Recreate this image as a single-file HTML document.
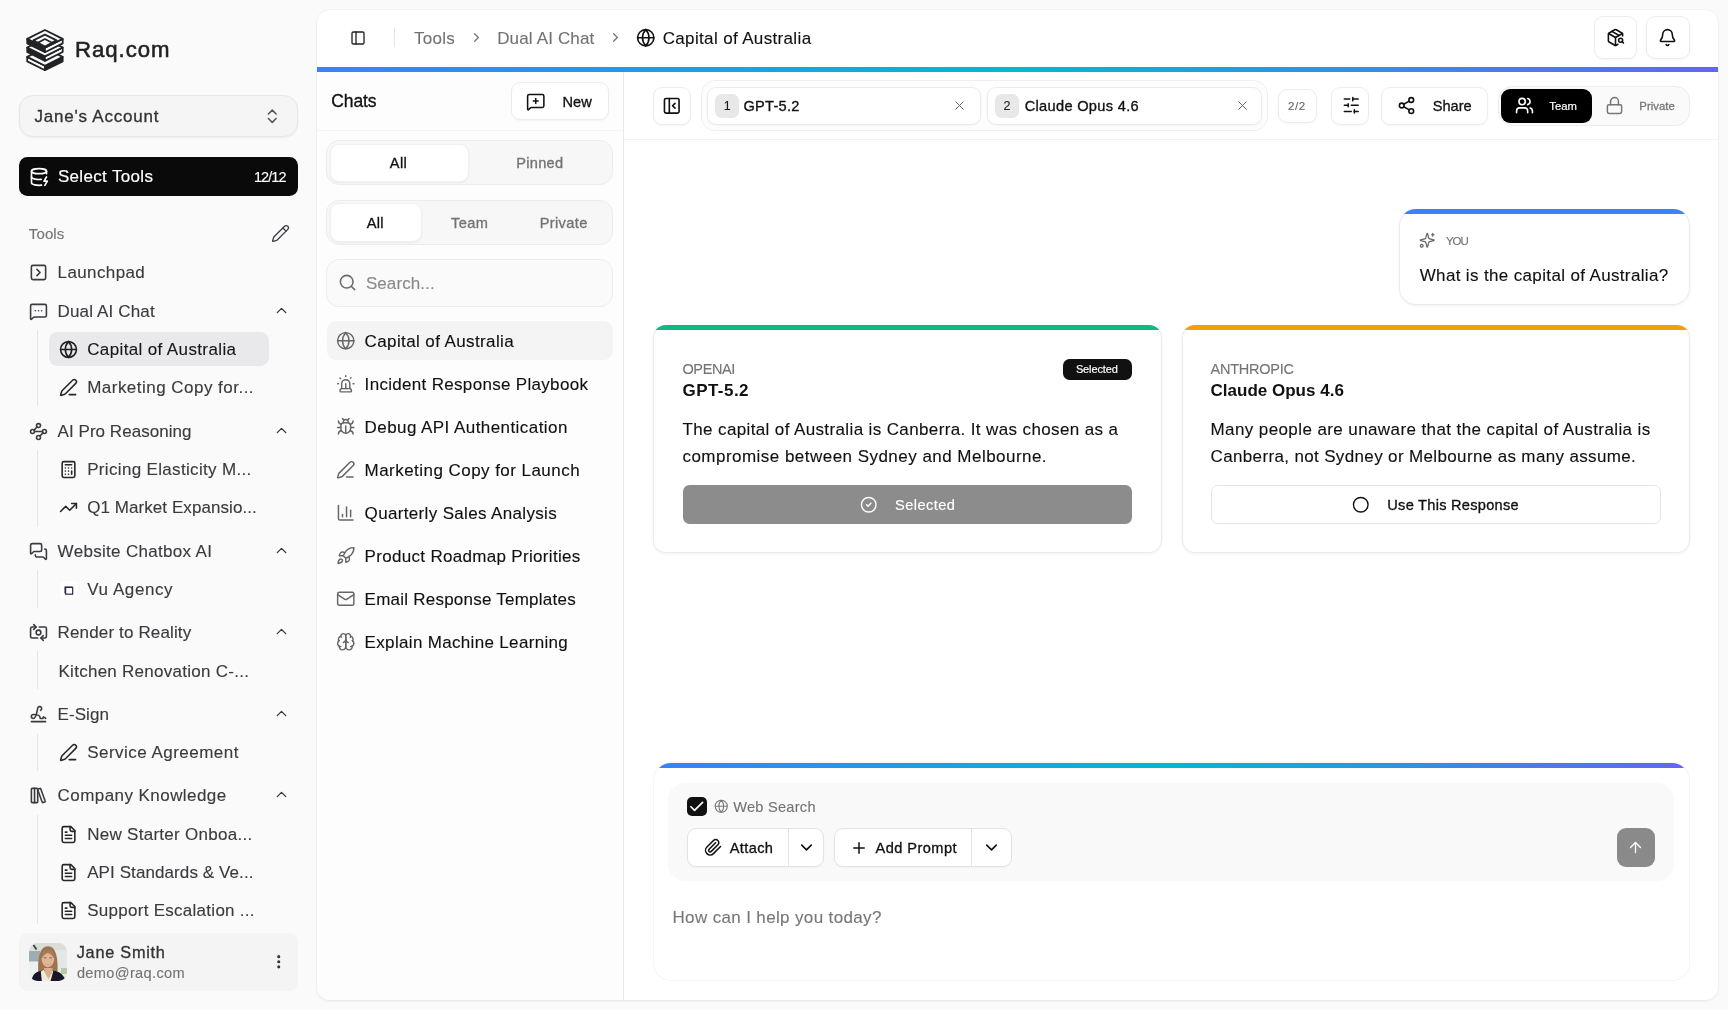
<!DOCTYPE html>
<html lang="en">
<head>
<meta charset="utf-8">
<title>Capital of Australia - Dual AI Chat - Raq.com</title>
<style>
*{box-sizing:border-box;margin:0;padding:0}
html,body{width:1728px;height:1010px;overflow:hidden;background:#fafafa}
body{font-family:"Liberation Sans",sans-serif;color:#171717;position:relative;-webkit-font-smoothing:antialiased}
.app{will-change:transform}
.app,.app *{position:absolute}
.app svg{position:static;display:block}
.app svg *{position:static}
.t{white-space:nowrap;display:block}
.ic{display:block}
.sidebar{background:#fafafa}
.acct{background:#f5f5f5;border:1px solid #e7e7e7;border-radius:14px;box-shadow:0 1px 2px rgba(0,0,0,.05)}
.seltools{background:#0a0a0a;border-radius:8.5px}
.srow{border-radius:8.5px}
.srow.on{background:#e9e9eb}
.guide{background:#e5e5e5}
.user{background:#f4f4f5;border-radius:8.5px}
.panel{background:#fff;border-radius:13px;box-shadow:0 0 0 1px rgba(0,0,0,.018),0 1px 3px rgba(0,0,0,.07);overflow:hidden}
.vsep{background:#e5e5e5}
.hbtn{background:#fff;border:1px solid #ececec;border-radius:9px;box-shadow:0 1px 2px rgba(0,0,0,.04)}
.gbar,.gbar2{background:linear-gradient(90deg,#3b82f6 0%,#06b6d4 50%,#6366f1 100%)}
.chats{background:#fdfdfd;border-right:1px solid #e9e9e9}
.chats-h{border-bottom:1px solid #f4f4f4}
.btn{background:#fff;border:1px solid #ececec;border-radius:9px;box-shadow:0 1px 2px rgba(0,0,0,.04)}
.tabs{background:#f7f7f7;border:1px solid #ececec;border-radius:13px}
.tab.on{background:#fff;border:1px solid #f0f0f0;border-radius:9px;box-shadow:0 1px 2px rgba(0,0,0,.05)}
.search{background:#fafafa;border:1px solid #ececec;border-radius:13px}
.clist{list-style:none}
.citem{border-radius:9px}
.citem.on{background:#f4f4f5}
.toolbar{border-bottom:1px solid #f3f3f3}
.models{border:1px solid #efefef;border-radius:14px;background:#fdfdfd}
.mpill{background:#fff;border:1px solid #ebebeb;border-radius:9px;box-shadow:0 1px 2px rgba(0,0,0,.04)}
.mnum{background:#e8e8e8;border-radius:6.5px}
.vis{background:#fafafa;border:1px solid #ececec;border-radius:14px}
.vis-on{background:#000;border-radius:9px}
.card{background:#fff;border-radius:17px;box-shadow:inset 0 0 0 1px #ebebeb,0 1px 3px rgba(0,0,0,.06);overflow:hidden}
.card.resp{border-radius:13px}
.badge{background:#111;border-radius:6.5px}
.selbtn{background:#8c8c8c;border-radius:6.5px}
.usebtn{background:#fff;border:1px solid #e5e5e5;border-radius:6.5px}
.composer{background:#fff;border-radius:17px;box-shadow:0 0 0 1px rgba(0,0,0,.04);overflow:hidden}
.opts{background:#f9f9f9;border-radius:17px}
.check{background:#111;border-radius:5px}
.bgroup{background:#fff;border:1px solid #e3e3e3;border-radius:9px;box-shadow:0 1px 2px rgba(0,0,0,.04)}
.bdiv{background:#e3e3e3}
.send{background:#8a8a8a;border-radius:9px}
</style>
</head>
<body>
<div class="app" style="left:0px;top:0px;width:1728px;height:1010px;">
 <aside class="sidebar" style="left:0px;top:0px;width:317px;height:1010px;">
  <div class="brand" style="left:19px;top:24px;width:279px;height:52px;">
   <span class="ic" style="left:6.5px;top:4.5px;width:38px;height:43px;"><svg viewBox="0 0 38 43" width="100%" height="100%"><g stroke="#212325" stroke-width="1.75" stroke-linejoin="round"><polygon points="1.20,27.85 18.95,36.70 18.95,41.20 1.20,32.35" fill="#fafafa"/><polygon points="18.95,36.70 36.70,27.85 36.70,32.35 18.95,41.20" fill="#212325"/><polygon points="18.95,19.00 36.70,27.85 18.95,36.70 1.20,27.85" fill="#fafafa"/><polygon points="1.20,18.50 18.95,27.35 18.95,31.85 1.20,23.00" fill="#212325"/><polygon points="18.95,27.35 36.70,18.50 36.70,23.00 18.95,31.85" fill="#fafafa"/><polygon points="18.95,9.65 36.70,18.50 18.95,27.35 1.20,18.50" fill="#fafafa"/><polygon points="1.20,9.85 18.95,18.70 18.95,23.20 1.20,14.35" fill="#212325"/><polygon points="18.95,18.70 36.70,9.85 36.70,14.35 18.95,23.20" fill="#fafafa"/><polygon points="18.95,1.00 36.70,9.85 18.95,18.70 1.20,9.85" fill="#fafafa"/><polygon points="18.95,5.6 30.6,11.4 18.95,17.2 7.3,11.4" fill="none"/><polygon points="18.95,10.1 26,13.85 18.95,17.6 11.9,13.85" fill="#fafafa"/></g></svg></span>
   <span class="t" style="left:56.1px;top:10px;width:116.7px;height:31px;font-size:22.2px;line-height:31px;letter-spacing:0.917px;-webkit-text-stroke:0.32px;color:#202224;-webkit-text-stroke:0.55px;">Raq.com</span>
  </div>
  <div class="acct" style="left:19px;top:95px;width:279px;height:42px;">
   <span class="t" style="left:14.5px;top:9px;width:140.8px;height:23px;font-size:17px;line-height:23px;letter-spacing:0.773px;-webkit-text-stroke:0.32px;color:#333;">Jane&#x27;s Account</span>
   <span class="ic" style="left:243.45px;top:11.35px;width:18.5px;height:18.5px;"><svg viewBox="0 0 24 24" width="100%" height="100%" fill="none" stroke="#555" stroke-width="2" stroke-linecap="round" stroke-linejoin="round"><path d="m7 15 5 5 5-5"/><path d="m7 9 5-5 5 5"/></svg></span>
  </div>
  <div class="seltools" style="left:19px;top:157px;width:279px;height:39px;">
   <span class="ic" style="left:9.8px;top:9.6px;width:20px;height:20px;"><svg viewBox="0 0 24 24" width="100%" height="100%" fill="none" stroke="#fff" stroke-width="2" stroke-linecap="round" stroke-linejoin="round"><ellipse cx="12" cy="5" rx="9" ry="3"/><path d="M3 5V19A9 3 0 0 0 15 21.84"/><path d="M21 5V8"/><path d="M21 12L18 17H22L19 22"/><path d="M3 12A9 3 0 0 0 14.59 14.87"/></svg></span>
   <span class="t" style="left:38.9px;top:8px;width:111.9px;height:23px;font-size:17px;line-height:23px;letter-spacing:0.332px;-webkit-text-stroke:0.18px;color:#fff;">Select Tools</span>
   <span class="t" style="left:234.9px;top:10px;width:47.1px;height:20px;font-size:14.5px;line-height:20px;letter-spacing:-0.913px;-webkit-text-stroke:0.12px;color:#fff;">12/12</span>
  </div>
  <span class="t lbl" style="left:28.8px;top:223px;width:50.5px;height:21px;font-size:15px;line-height:21px;letter-spacing:0.125px;-webkit-text-stroke:0.12px;color:#737373;">Tools</span>
  <span class="ic" style="left:271.1px;top:223.5px;width:19px;height:19px;"><svg viewBox="0 0 24 24" width="100%" height="100%" fill="none" stroke="#3f3f46" stroke-width="1.7" stroke-linecap="round" stroke-linejoin="round"><path d="M21.174 6.812a1 1 0 0 0-3.986-3.987L3.842 16.174a2 2 0 0 0-.5.83l-1.321 4.352a.5.5 0 0 0 .623.622l4.353-1.32a2 2 0 0 0 .83-.497z"/><path d="m15 5 4 4"/></svg></span>
  <nav class="nav" style="left:19px;top:255px;width:279px;height:669px;overflow:hidden;">
   <div class="nrow" style="left:0px;top:0px;width:279px;height:34px;">
    <span class="ic" style="left:9.95px;top:7.55px;width:19px;height:19px;"><svg viewBox="0 0 24 24" width="100%" height="100%" fill="none" stroke="#3a3a3f" stroke-width="2" stroke-linecap="round" stroke-linejoin="round"><rect width="18" height="18" x="3" y="3" rx="2"/><path d="m10 8 4 4-4 4"/></svg></span>
    <span class="t" style="left:38.6px;top:6px;width:104.3px;height:23px;font-size:17px;line-height:23px;letter-spacing:0.381px;-webkit-text-stroke:0.12px;color:#3a3a3f;">Launchpad</span>
   </div>
   <div class="nrow" style="left:0px;top:39px;width:279px;height:34px;">
    <span class="ic" style="left:9.95px;top:7.55px;width:19px;height:19px;"><svg viewBox="0 0 24 24" width="100%" height="100%" fill="none" stroke="#3a3a3f" stroke-width="2" stroke-linecap="round" stroke-linejoin="round"><path d="M22 17a2 2 0 0 1-2 2H6.828a2 2 0 0 0-1.414.586l-2.202 2.202A.71.71 0 0 1 2 21.286V5a2 2 0 0 1 2-2h16a2 2 0 0 1 2 2z"/><path d="M12 11h.01"/><path d="M16 11h.01"/><path d="M8 11h.01"/></svg></span>
    <span class="t" style="left:38.6px;top:6px;width:114.1px;height:23px;font-size:17px;line-height:23px;letter-spacing:0.145px;-webkit-text-stroke:0.12px;color:#3a3a3f;">Dual AI Chat</span>
    <span class="ic" style="left:253.9px;top:7.9px;width:17px;height:17px;"><svg viewBox="0 0 24 24" width="100%" height="100%" fill="none" stroke="#3a3a3f" stroke-width="1.9" stroke-linecap="round" stroke-linejoin="round"><path d="m18 15-6-6-6 6"/></svg></span>
   </div>
   <div class="grp" style="left:0px;top:75px;width:279px;height:76.4px;">
    <div class="guide" style="left:18px;top:0px;width:1px;height:76.4px;"></div>
    <div class="srow on" style="left:30px;top:2.2px;width:220px;height:33.6px;">
     <span class="ic" style="left:10px;top:7.4px;width:19px;height:19px;"><svg viewBox="0 0 24 24" width="100%" height="100%" fill="none" stroke="#1f1f23" stroke-width="2" stroke-linecap="round" stroke-linejoin="round"><circle cx="12" cy="12" r="10"/><path d="M12 2a14.5 14.5 0 0 0 0 20 14.5 14.5 0 0 0 0-20"/><path d="M2 12h20"/></svg></span>
     <span class="t" style="left:38.2px;top:5.8px;width:165.8px;height:23px;font-size:17px;line-height:23px;letter-spacing:0.371px;-webkit-text-stroke:0.12px;color:#18181b;">Capital of Australia</span>
    </div>
    <div class="srow" style="left:30px;top:40.2px;width:220px;height:33.6px;">
     <span class="ic" style="left:10px;top:7.4px;width:19px;height:19px;"><svg viewBox="0 0 24 24" width="100%" height="100%" fill="none" stroke="#27272a" stroke-width="2" stroke-linecap="round" stroke-linejoin="round"><path d="M13 21h8"/><path d="M21.174 6.812a1 1 0 0 0-3.986-3.987L3.842 16.174a2 2 0 0 0-.5.83l-1.321 4.352a.5.5 0 0 0 .623.622l4.353-1.32a2 2 0 0 0 .83-.497z"/></svg></span>
     <span class="t" style="left:38.2px;top:5.8px;width:183.3px;height:23px;font-size:17px;line-height:23px;letter-spacing:0.477px;-webkit-text-stroke:0.12px;color:#3a3a3f;">Marketing Copy for...</span>
    </div>
   </div>
   <div class="nrow" style="left:0px;top:159px;width:279px;height:34px;">
    <span class="ic" style="left:9.95px;top:7.55px;width:19px;height:19px;"><svg viewBox="0 0 24 24" width="100%" height="100%" fill="none" stroke="#3a3a3f" stroke-width="2" stroke-linecap="round" stroke-linejoin="round"><circle cx="12" cy="4.5" r="2.5"/><path d="m10.2 6.3-3.9 3.9"/><circle cx="4.5" cy="12" r="2.5"/><path d="M7 12h10"/><circle cx="19.5" cy="12" r="2.5"/><path d="m13.8 17.7 3.9-3.9"/><circle cx="12" cy="19.5" r="2.5"/></svg></span>
    <span class="t" style="left:38.6px;top:6px;width:150.9px;height:23px;font-size:17px;line-height:23px;letter-spacing:0.043px;-webkit-text-stroke:0.12px;color:#3a3a3f;">AI Pro Reasoning</span>
    <span class="ic" style="left:253.9px;top:7.9px;width:17px;height:17px;"><svg viewBox="0 0 24 24" width="100%" height="100%" fill="none" stroke="#3a3a3f" stroke-width="1.9" stroke-linecap="round" stroke-linejoin="round"><path d="m18 15-6-6-6 6"/></svg></span>
   </div>
   <div class="grp" style="left:0px;top:195.2px;width:279px;height:76.4px;">
    <div class="guide" style="left:18px;top:0px;width:1px;height:76.4px;"></div>
    <div class="srow" style="left:30px;top:2px;width:220px;height:33.6px;">
     <span class="ic" style="left:10px;top:7.4px;width:19px;height:19px;"><svg viewBox="0 0 24 24" width="100%" height="100%" fill="none" stroke="#27272a" stroke-width="2" stroke-linecap="round" stroke-linejoin="round"><rect width="16" height="20" x="4" y="2" rx="2"/><line x1="8" x2="16" y1="6" y2="6"/><line x1="16" x2="16" y1="14" y2="18"/><path d="M16 10h.01"/><path d="M12 10h.01"/><path d="M8 10h.01"/><path d="M12 14h.01"/><path d="M8 14h.01"/><path d="M12 18h.01"/><path d="M8 18h.01"/></svg></span>
     <span class="t" style="left:38.2px;top:5.8px;width:181.1px;height:23px;font-size:17px;line-height:23px;letter-spacing:0.334px;-webkit-text-stroke:0.12px;color:#3a3a3f;">Pricing Elasticity M...</span>
    </div>
    <div class="srow" style="left:30px;top:40px;width:220px;height:33.6px;">
     <span class="ic" style="left:10px;top:7.4px;width:19px;height:19px;"><svg viewBox="0 0 24 24" width="100%" height="100%" fill="none" stroke="#27272a" stroke-width="2" stroke-linecap="round" stroke-linejoin="round"><polyline points="22 7 13.5 15.5 8.5 10.5 2 17"/><polyline points="16 7 22 7 22 13"/></svg></span>
     <span class="t" style="left:38.2px;top:5.8px;width:186.6px;height:23px;font-size:17px;line-height:23px;letter-spacing:0.067px;-webkit-text-stroke:0.12px;color:#3a3a3f;">Q1 Market Expansio...</span>
    </div>
   </div>
   <div class="nrow" style="left:0px;top:279px;width:279px;height:34px;">
    <span class="ic" style="left:9.95px;top:7.55px;width:19px;height:19px;"><svg viewBox="0 0 24 24" width="100%" height="100%" fill="none" stroke="#3a3a3f" stroke-width="2" stroke-linecap="round" stroke-linejoin="round"><path d="M16 10a2 2 0 0 1-2 2H6.828a2 2 0 0 0-1.414.586l-2.202 2.202A.71.71 0 0 1 2 14.286V4a2 2 0 0 1 2-2h10a2 2 0 0 1 2 2z"/><path d="M20 9a2 2 0 0 1 2 2v10.286a.71.71 0 0 1-1.212.502l-2.202-2.202A2 2 0 0 0 17.172 19H10a2 2 0 0 1-2-2v-1"/></svg></span>
    <span class="t" style="left:38.6px;top:6px;width:171.3px;height:23px;font-size:17px;line-height:23px;letter-spacing:0.312px;-webkit-text-stroke:0.12px;color:#3a3a3f;">Website Chatbox AI</span>
    <span class="ic" style="left:253.9px;top:7.9px;width:17px;height:17px;"><svg viewBox="0 0 24 24" width="100%" height="100%" fill="none" stroke="#3a3a3f" stroke-width="1.9" stroke-linecap="round" stroke-linejoin="round"><path d="m18 15-6-6-6 6"/></svg></span>
   </div>
   <div class="grp" style="left:0px;top:315.2px;width:279px;height:37.6px;">
    <div class="guide" style="left:18px;top:0px;width:1px;height:37.6px;"></div>
    <div class="srow" style="left:30px;top:2px;width:220px;height:33.6px;">
     <span class="ic" style="left:10.5px;top:8.6px;width:18.4px;height:18.4px;"><svg viewBox="0 0 18 18" width="100%" height="100%"><rect width="18" height="18" rx="4.5" fill="#fff"/><rect x="5.4" y="6.3" width="7" height="6.6" fill="#fff" stroke="#26264d" stroke-width="1.15"/><path d="M5.2 12V6.1h7" fill="none" stroke="#26264d" stroke-width="1.6"/></svg></span>
     <span class="t" style="left:38.2px;top:5.8px;width:102.5px;height:23px;font-size:17px;line-height:23px;letter-spacing:0.594px;-webkit-text-stroke:0.12px;color:#3a3a3f;">Vu Agency</span>
    </div>
   </div>
   <div class="nrow" style="left:0px;top:360px;width:279px;height:34px;">
    <span class="ic" style="left:9.95px;top:7.55px;width:19px;height:19px;"><svg viewBox="0 0 24 24" width="100%" height="100%" fill="none" stroke="#3a3a3f" stroke-width="2" stroke-linecap="round" stroke-linejoin="round"><path d="M11 19H4a2 2 0 0 1-2-2V7a2 2 0 0 1 2-2h5"/><path d="M13 5h7a2 2 0 0 1 2 2v10a2 2 0 0 1-2 2h-5"/><circle cx="12" cy="12" r="3"/><path d="m18 22-3-3 3-3"/><path d="m6 2 3 3-3 3"/></svg></span>
    <span class="t" style="left:38.6px;top:6px;width:150.5px;height:23px;font-size:17px;line-height:23px;letter-spacing:0.141px;-webkit-text-stroke:0.12px;color:#3a3a3f;">Render to Reality</span>
    <span class="ic" style="left:253.9px;top:7.9px;width:17px;height:17px;"><svg viewBox="0 0 24 24" width="100%" height="100%" fill="none" stroke="#3a3a3f" stroke-width="1.9" stroke-linecap="round" stroke-linejoin="round"><path d="m18 15-6-6-6 6"/></svg></span>
   </div>
   <div class="grp" style="left:0px;top:396.2px;width:279px;height:38.2px;">
    <div class="guide" style="left:18px;top:0px;width:1px;height:38.2px;"></div>
    <div class="srow" style="left:30px;top:3px;width:220px;height:33.6px;">
     <span class="t" style="left:9.5px;top:5.8px;width:207.4px;height:23px;font-size:17px;line-height:23px;letter-spacing:0.267px;-webkit-text-stroke:0.12px;color:#3a3a3f;">Kitchen Renovation C-...</span>
    </div>
   </div>
   <div class="nrow" style="left:0px;top:442px;width:279px;height:34px;">
    <span class="ic" style="left:9.95px;top:7.55px;width:19px;height:19px;"><svg viewBox="0 0 24 24" width="100%" height="100%" fill="none" stroke="#3a3a3f" stroke-width="2" stroke-linecap="round" stroke-linejoin="round"><path d="m21 17-2.156-1.868A.5.5 0 0 0 18 15.5v.5a1 1 0 0 1-1 1h-2a1 1 0 0 1-1-1c0-2.545-3.991-3.97-8.5-4a1 1 0 0 0 0 5c4.153 0 4.745-11.295 5.708-13.5a2.5 2.5 0 1 1 3.31 3.284"/><path d="M3 21h18"/></svg></span>
    <span class="t" style="left:38.6px;top:6px;width:68.3px;height:23px;font-size:17px;line-height:23px;letter-spacing:0.060px;-webkit-text-stroke:0.12px;color:#3a3a3f;">E-Sign</span>
    <span class="ic" style="left:253.9px;top:7.9px;width:17px;height:17px;"><svg viewBox="0 0 24 24" width="100%" height="100%" fill="none" stroke="#3a3a3f" stroke-width="1.9" stroke-linecap="round" stroke-linejoin="round"><path d="m18 15-6-6-6 6"/></svg></span>
   </div>
   <div class="grp" style="left:0px;top:478.6px;width:279px;height:37.4px;">
    <div class="guide" style="left:18px;top:0px;width:1px;height:37.4px;"></div>
    <div class="srow" style="left:30px;top:1.6px;width:220px;height:33.6px;">
     <span class="ic" style="left:10px;top:7.4px;width:19px;height:19px;"><svg viewBox="0 0 24 24" width="100%" height="100%" fill="none" stroke="#27272a" stroke-width="2" stroke-linecap="round" stroke-linejoin="round"><path d="M13 21h8"/><path d="M21.174 6.812a1 1 0 0 0-3.986-3.987L3.842 16.174a2 2 0 0 0-.5.83l-1.321 4.352a.5.5 0 0 0 .623.622l4.353-1.32a2 2 0 0 0 .83-.497z"/></svg></span>
     <span class="t" style="left:38.2px;top:5.8px;width:168.3px;height:23px;font-size:17px;line-height:23px;letter-spacing:0.472px;-webkit-text-stroke:0.12px;color:#3a3a3f;">Service Agreement</span>
    </div>
   </div>
   <div class="nrow" style="left:0px;top:523px;width:279px;height:34px;">
    <span class="ic" style="left:9.95px;top:7.55px;width:19px;height:19px;"><svg viewBox="0 0 24 24" width="100%" height="100%" fill="none" stroke="#3a3a3f" stroke-width="2" stroke-linecap="round" stroke-linejoin="round"><rect width="8" height="18" x="3" y="3" rx="1"/><path d="M7 3v18"/><path d="M20.4 18.9c.2.5-.1 1.1-.6 1.3l-1.9.7c-.5.2-1.1-.1-1.3-.6L11.1 5.1c-.2-.5.1-1.1.6-1.3l1.9-.7c.5-.2 1.1.1 1.3.6Z"/></svg></span>
    <span class="t" style="left:38.6px;top:6px;width:185.5px;height:23px;font-size:17px;line-height:23px;letter-spacing:0.438px;-webkit-text-stroke:0.12px;color:#3a3a3f;">Company Knowledge</span>
    <span class="ic" style="left:253.9px;top:7.9px;width:17px;height:17px;"><svg viewBox="0 0 24 24" width="100%" height="100%" fill="none" stroke="#3a3a3f" stroke-width="1.9" stroke-linecap="round" stroke-linejoin="round"><path d="m18 15-6-6-6 6"/></svg></span>
   </div>
   <div class="grp" style="left:0px;top:560px;width:279px;height:115px;">
    <div class="guide" style="left:18px;top:0px;width:1px;height:115px;"></div>
    <div class="srow" style="left:30px;top:2.2px;width:220px;height:33.6px;">
     <span class="ic" style="left:10px;top:7.4px;width:19px;height:19px;"><svg viewBox="0 0 24 24" width="100%" height="100%" fill="none" stroke="#27272a" stroke-width="2" stroke-linecap="round" stroke-linejoin="round"><path d="M15 2H6a2 2 0 0 0-2 2v16a2 2 0 0 0 2 2h12a2 2 0 0 0 2-2V7Z"/><path d="M14 2v4a2 2 0 0 0 2 2h4"/><path d="M10 9H8"/><path d="M16 13H8"/><path d="M16 17H8"/></svg></span>
     <span class="t" style="left:38.2px;top:5.8px;width:182.1px;height:23px;font-size:17px;line-height:23px;letter-spacing:0.282px;-webkit-text-stroke:0.12px;color:#3a3a3f;">New Starter Onboa...</span>
    </div>
    <div class="srow" style="left:30px;top:40.2px;width:220px;height:33.6px;">
     <span class="ic" style="left:10px;top:7.4px;width:19px;height:19px;"><svg viewBox="0 0 24 24" width="100%" height="100%" fill="none" stroke="#27272a" stroke-width="2" stroke-linecap="round" stroke-linejoin="round"><path d="M15 2H6a2 2 0 0 0-2 2v16a2 2 0 0 0 2 2h12a2 2 0 0 0 2-2V7Z"/><path d="M14 2v4a2 2 0 0 0 2 2h4"/><path d="M10 9H8"/><path d="M16 13H8"/><path d="M16 17H8"/></svg></span>
     <span class="t" style="left:38.2px;top:5.8px;width:183.3px;height:23px;font-size:17px;line-height:23px;letter-spacing:0.090px;-webkit-text-stroke:0.12px;color:#3a3a3f;">API Standards &amp; Ve...</span>
    </div>
    <div class="srow" style="left:30px;top:78.4px;width:220px;height:33.6px;">
     <span class="ic" style="left:10px;top:7.4px;width:19px;height:19px;"><svg viewBox="0 0 24 24" width="100%" height="100%" fill="none" stroke="#27272a" stroke-width="2" stroke-linecap="round" stroke-linejoin="round"><path d="M15 2H6a2 2 0 0 0-2 2v16a2 2 0 0 0 2 2h12a2 2 0 0 0 2-2V7Z"/><path d="M14 2v4a2 2 0 0 0 2 2h4"/><path d="M10 9H8"/><path d="M16 13H8"/><path d="M16 17H8"/></svg></span>
     <span class="t" style="left:38.2px;top:5.6px;width:184.3px;height:23px;font-size:17px;line-height:23px;letter-spacing:0.276px;-webkit-text-stroke:0.12px;color:#3a3a3f;">Support Escalation ...</span>
    </div>
   </div>
  </nav>
  <div class="user" style="left:19px;top:933.4px;width:279px;height:57.8px;">
   <span class="ic" style="left:10px;top:9.6px;width:38px;height:38px;"><svg viewBox="0 0 38 38" width="100%" height="100%"><defs><clipPath id="avc"><rect width="38" height="38" rx="8.5"/></clipPath><filter id="avb" x="-10%" y="-10%" width="120%" height="120%"><feGaussianBlur stdDeviation="0.55"/></filter></defs><g clip-path="url(#avc)"><g filter="url(#avb)">
<rect x="-2" y="-2" width="42" height="42" fill="#dcddd6"/>
<rect x="-2" y="8" width="13" height="11" fill="#9fadb3"/><rect x="-2" y="18.500" width="13" height="22" fill="#eef1f1"/>
<rect x="24" y="7" width="16" height="26" fill="#e3e8e6"/><rect x="32" y="25" width="8" height="6" fill="#b9c9a3"/>
<path d="M4.500 2 7.500 6.500" stroke="#3d443c" stroke-width="1.800"/>
<path d="M9.300 29.500C8.500 18 10 3.200 18.800 3.200S29.200 17 28.400 29.500z" fill="#9b7450"/>
<path d="M2.800 40c-.5-8 3.500-11 9.500-12.200h12.800c6 1.200 10.500 4.200 11.700 12.200z" fill="#141828"/>
<path d="M11.800 28.500 14.500 27 18.500 31 23 27l1.200 1.500L21 40h-8z" fill="#f1e9dd"/>
<path d="M15 25h8.500l-.5 5-3.500 6-3.500-6z" fill="#dcae8e"/>
<ellipse cx="18.900" cy="16" rx="6.300" ry="8.200" fill="#e2b494"/>
<path d="M12.300 16.500c-.6-7 2.500-10 6.500-10s7.300 3 6.700 10c-1.500-4-4-6-6.600-6.600-2.500.8-5 2.600-6.600 6.600z" fill="#a47c56"/>
<path d="M16.300 20.800q2.600 1.900 5.200 0" fill="#f6eeea" stroke="#b5705c" stroke-width=".6"/>
<path d="M14.800 14.800h2.600M20.400 14.800h2.600" stroke="#6b5140" stroke-width=".8"/>
</g></g></svg></span>
   <span class="t" style="left:57.7px;top:8.6px;width:104.3px;height:20px;font-size:16.3px;line-height:20px;letter-spacing:0.750px;-webkit-text-stroke:0.32px;color:#333;">Jane Smith</span>
   <span class="t" style="left:57.9px;top:30.6px;width:121.6px;height:18px;font-size:14.6px;line-height:18px;letter-spacing:0.341px;-webkit-text-stroke:0.12px;color:#737373;">demo@raq.com</span>
   <span class="ic" style="left:250.85px;top:19.85px;width:17.5px;height:17.5px;"><svg viewBox="0 0 24 24" width="100%" height="100%" fill="none" stroke="#333" stroke-width="2.3" stroke-linecap="round" stroke-linejoin="round"><circle cx="12" cy="12" r="1"/><circle cx="12" cy="5" r="1"/><circle cx="12" cy="19" r="1"/></svg></span>
  </div>
 </aside>
 <main class="panel" style="left:317px;top:10px;width:1401px;height:990px;">
  <header class="hdr" style="left:0px;top:0px;width:1401px;height:57px;">
   <span class="ic" style="left:32.5px;top:19.5px;width:16px;height:16px;"><svg viewBox="0 0 24 24" width="100%" height="100%" fill="none" stroke="#222" stroke-width="2" stroke-linecap="round" stroke-linejoin="round"><rect width="18" height="18" x="3" y="3" rx="2"/><path d="M9 3v18"/></svg></span>
   <div class="vsep" style="left:77px;top:18px;width:1px;height:19px;"></div>
   <span class="t" style="left:96.9px;top:17px;width:58px;height:23px;font-size:17px;line-height:23px;letter-spacing:0.312px;-webkit-text-stroke:0.12px;color:#737373;">Tools</span>
   <span class="ic" style="left:151.7px;top:20.4px;width:15px;height:15px;"><svg viewBox="0 0 24 24" width="100%" height="100%" fill="none" stroke="#737373" stroke-width="2" stroke-linecap="round" stroke-linejoin="round"><path d="m9 18 6-6-6-6"/></svg></span>
   <span class="t" style="left:180.2px;top:17px;width:114.1px;height:23px;font-size:17px;line-height:23px;letter-spacing:0.145px;-webkit-text-stroke:0.12px;color:#737373;">Dual AI Chat</span>
   <span class="ic" style="left:290.9px;top:20.4px;width:15px;height:15px;"><svg viewBox="0 0 24 24" width="100%" height="100%" fill="none" stroke="#737373" stroke-width="2" stroke-linecap="round" stroke-linejoin="round"><path d="m9 18 6-6-6-6"/></svg></span>
   <span class="ic" style="left:318.55px;top:18.05px;width:19.5px;height:19.5px;"><svg viewBox="0 0 24 24" width="100%" height="100%" fill="none" stroke="#101012" stroke-width="2" stroke-linecap="round" stroke-linejoin="round"><circle cx="12" cy="12" r="10"/><path d="M12 2a14.5 14.5 0 0 0 0 20 14.5 14.5 0 0 0 0-20"/><path d="M2 12h20"/></svg></span>
   <span class="t" style="left:345.7px;top:17px;width:165.4px;height:23px;font-size:17px;line-height:23px;letter-spacing:0.350px;-webkit-text-stroke:0.12px;color:#101012;">Capital of Australia</span>
   <div class="hbtn" style="left:1276.8px;top:5.7px;width:43.3px;height:43.4px;">
    <span class="ic" style="left:11.3px;top:11.2px;width:19px;height:19px;"><svg viewBox="0 0 24 24" width="100%" height="100%" fill="none" stroke="#111" stroke-width="2" stroke-linecap="round" stroke-linejoin="round"><path d="M21 10V8a2 2 0 0 0-1-1.73l-7-4a2 2 0 0 0-2 0l-7 4A2 2 0 0 0 3 8v8a2 2 0 0 0 1 1.73l7 4a2 2 0 0 0 2 0l2-1.14"/><path d="m7.5 4.27 9 5.15"/><polyline points="3.29 7 12 12 20.71 7"/><line x1="12" x2="12" y1="22" y2="12"/><circle cx="18.5" cy="15.5" r="2.5"/><path d="M20.27 17.27 22 19"/></svg></span>
   </div>
   <div class="hbtn" style="left:1328.8px;top:5.7px;width:44.2px;height:43.4px;">
    <span class="ic" style="left:11.4px;top:11.2px;width:19px;height:19px;"><svg viewBox="0 0 24 24" width="100%" height="100%" fill="none" stroke="#111" stroke-width="2" stroke-linecap="round" stroke-linejoin="round"><path d="M10.268 21a2 2 0 0 0 3.464 0"/><path d="M3.262 15.326A1 1 0 0 0 4 17h16a1 1 0 0 0 .74-1.673C19.41 13.956 18 12.499 18 8A6 6 0 0 0 6 8c0 4.499-1.411 5.956-2.738 7.326"/></svg></span>
   </div>
  </header>
  <div class="gbar" style="left:0px;top:57px;width:1401px;height:5px;"></div>
  <section class="chats" style="left:0px;top:62px;width:307px;height:928px;">
   <div class="chats-h" style="left:0px;top:0px;width:306px;height:59px;">
    <span class="t" style="left:14.3px;top:18px;width:62.8px;height:22px;font-size:17.5px;line-height:22px;letter-spacing:-0.112px;-webkit-text-stroke:0.32px;color:#111;">Chats</span>
    <div class="btn" style="left:193.9px;top:9.9px;width:98.3px;height:38.3px;">
     <span class="ic" style="left:14.15px;top:9.35px;width:19.5px;height:19.5px;"><svg viewBox="0 0 24 24" width="100%" height="100%" fill="none" stroke="#111" stroke-width="1.9" stroke-linecap="round" stroke-linejoin="round"><path d="M22 17a2 2 0 0 1-2 2H6.828a2 2 0 0 0-1.414.586l-2.202 2.202A.71.71 0 0 1 2 21.286V5a2 2 0 0 1 2-2h16a2 2 0 0 1 2 2z"/><path d="M12 8v6"/><path d="M9 11h6"/></svg></span>
     <span class="t" style="left:50.6px;top:9.1px;width:44px;height:20px;font-size:14.6px;line-height:20px;letter-spacing:0.075px;-webkit-text-stroke:0.32px;color:#111;">New</span>
    </div>
   </div>
   <div class="tabs" style="left:9.3px;top:68.2px;width:286.9px;height:44.6px;">
    <div class="tab on" style="left:2.7px;top:2.5px;width:138.9px;height:38.6px;">
     <span class="t" style="left:58.8px;top:8.3px;width:31.4px;height:20px;font-size:14.6px;line-height:20px;letter-spacing:0.400px;-webkit-text-stroke:0.32px;color:#111;">All</span>
    </div>
    <span class="t" style="left:189px;top:11.8px;width:61.2px;height:20px;font-size:14.6px;line-height:20px;letter-spacing:0.270px;-webkit-text-stroke:0.32px;color:#737373;">Pinned</span>
   </div>
   <div class="tabs" style="left:9.3px;top:128px;width:286.9px;height:44.8px;">
    <div class="tab on" style="left:2.7px;top:2px;width:91.6px;height:38.8px;">
     <span class="t" style="left:35.7px;top:9px;width:31.2px;height:20px;font-size:14.6px;line-height:20px;letter-spacing:0.300px;-webkit-text-stroke:0.32px;color:#111;">All</span>
    </div>
    <span class="t" style="left:123.8px;top:12px;width:51.2px;height:20px;font-size:14.6px;line-height:20px;letter-spacing:0.367px;-webkit-text-stroke:0.32px;color:#737373;">Team</span>
    <span class="t" style="left:212.4px;top:12px;width:62px;height:20px;font-size:14.6px;line-height:20px;letter-spacing:0.358px;-webkit-text-stroke:0.32px;color:#737373;">Private</span>
   </div>
   <div class="search" style="left:9.3px;top:187.1px;width:286.9px;height:47.6px;">
    <span class="ic" style="left:10.8px;top:13.4px;width:19px;height:19px;"><svg viewBox="0 0 24 24" width="100%" height="100%" fill="none" stroke="#6b6b6b" stroke-width="2" stroke-linecap="round" stroke-linejoin="round"><circle cx="11" cy="11" r="8"/><path d="m21 21-4.3-4.3"/></svg></span>
    <span class="t" style="left:38.6px;top:11.9px;width:85.7px;height:23px;font-size:17px;line-height:23px;letter-spacing:0.087px;-webkit-text-stroke:0.12px;color:#8a8a8a;">Search...</span>
   </div>
   <ul class="clist" style="left:9.8px;top:249.2px;width:285.9px;height:348.8px;">
    <li class="citem on" style="left:0px;top:0.1px;width:285.9px;height:38.6px;">
     <span class="ic" style="left:8.85px;top:9.85px;width:19.5px;height:19.5px;"><svg viewBox="0 0 24 24" width="100%" height="100%" fill="none" stroke="#666" stroke-width="1.8" stroke-linecap="round" stroke-linejoin="round"><circle cx="12" cy="12" r="10"/><path d="M12 2a14.5 14.5 0 0 0 0 20 14.5 14.5 0 0 0 0-20"/><path d="M2 12h20"/></svg></span>
     <span class="t" style="left:37.8px;top:8.7px;width:166.1px;height:23px;font-size:17px;line-height:23px;letter-spacing:0.387px;-webkit-text-stroke:0.12px;color:#101012;">Capital of Australia</span>
    </li>
    <li class="citem" style="left:0px;top:43.13px;width:285.9px;height:38.6px;">
     <span class="ic" style="left:8.85px;top:9.85px;width:19.5px;height:19.5px;"><svg viewBox="0 0 24 24" width="100%" height="100%" fill="none" stroke="#666" stroke-width="1.8" stroke-linecap="round" stroke-linejoin="round"><path d="M7 18v-6a5 5 0 1 1 10 0v6"/><path d="M5 21a1 1 0 0 0 1 1h12a1 1 0 0 0 1-1v-1a2 2 0 0 0-2-2H7a2 2 0 0 0-2 2z"/><path d="M21 12h1"/><path d="M18.5 4.5 18 5"/><path d="M2 12h1"/><path d="M12 2v1"/><path d="m4.929 4.929.707.707"/><path d="M12 12v6"/></svg></span>
     <span class="t" style="left:37.8px;top:8.67px;width:240.6px;height:23px;font-size:17px;line-height:23px;letter-spacing:0.314px;-webkit-text-stroke:0.12px;color:#101012;">Incident Response Playbook</span>
    </li>
    <li class="citem" style="left:0px;top:86.16px;width:285.9px;height:38.6px;">
     <span class="ic" style="left:8.85px;top:9.85px;width:19.5px;height:19.5px;"><svg viewBox="0 0 24 24" width="100%" height="100%" fill="none" stroke="#666" stroke-width="1.8" stroke-linecap="round" stroke-linejoin="round"><path d="m8 2 1.88 1.88"/><path d="M14.12 3.88 16 2"/><path d="M9 7.13v-1a3.003 3.003 0 1 1 6 0v1"/><path d="M12 20c-3.3 0-6-2.7-6-6v-3a4 4 0 0 1 4-4h4a4 4 0 0 1 4 4v3c0 3.3-2.7 6-6 6"/><path d="M12 20v-9"/><path d="M6.53 9C4.6 8.8 3 7.1 3 5"/><path d="M6 13H2"/><path d="M3 21c0-2.1 1.7-3.9 3.8-4"/><path d="M20.97 5c0 2.1-1.6 3.8-3.5 4"/><path d="M22 13h-4"/><path d="M17.2 17c2.1.1 3.8 1.9 3.8 4"/></svg></span>
     <span class="t" style="left:37.8px;top:8.64px;width:219.7px;height:23px;font-size:17px;line-height:23px;letter-spacing:0.433px;-webkit-text-stroke:0.12px;color:#101012;">Debug API Authentication</span>
    </li>
    <li class="citem" style="left:0px;top:129.19px;width:285.9px;height:38.6px;">
     <span class="ic" style="left:8.85px;top:9.85px;width:19.5px;height:19.5px;"><svg viewBox="0 0 24 24" width="100%" height="100%" fill="none" stroke="#666" stroke-width="1.8" stroke-linecap="round" stroke-linejoin="round"><path d="M13 21h8"/><path d="M21.174 6.812a1 1 0 0 0-3.986-3.987L3.842 16.174a2 2 0 0 0-.5.83l-1.321 4.352a.5.5 0 0 0 .623.622l4.353-1.32a2 2 0 0 0 .83-.497z"/></svg></span>
     <span class="t" style="left:37.8px;top:8.61px;width:231.9px;height:23px;font-size:17px;line-height:23px;letter-spacing:0.454px;-webkit-text-stroke:0.12px;color:#101012;">Marketing Copy for Launch</span>
    </li>
    <li class="citem" style="left:0px;top:172.22px;width:285.9px;height:38.6px;">
     <span class="ic" style="left:8.85px;top:9.85px;width:19.5px;height:19.5px;"><svg viewBox="0 0 24 24" width="100%" height="100%" fill="none" stroke="#666" stroke-width="1.8" stroke-linecap="round" stroke-linejoin="round"><path d="M3 3v16a2 2 0 0 0 2 2h16"/><path d="M18 17V9"/><path d="M13 17V5"/><path d="M8 17v-3"/></svg></span>
     <span class="t" style="left:37.8px;top:8.58px;width:209.1px;height:23px;font-size:17px;line-height:23px;letter-spacing:0.341px;-webkit-text-stroke:0.12px;color:#101012;">Quarterly Sales Analysis</span>
    </li>
    <li class="citem" style="left:0px;top:215.25px;width:285.9px;height:38.6px;">
     <span class="ic" style="left:8.85px;top:9.85px;width:19.5px;height:19.5px;"><svg viewBox="0 0 24 24" width="100%" height="100%" fill="none" stroke="#666" stroke-width="1.8" stroke-linecap="round" stroke-linejoin="round"><path d="M4.5 16.5c-1.5 1.26-2 5-2 5s3.74-.5 5-2c.71-.84.7-2.13-.09-2.91a2.18 2.18 0 0 0-2.91-.09z"/><path d="m12 15-3-3a22 22 0 0 1 2-3.95A12.88 12.88 0 0 1 22 2c0 2.72-.78 7.5-6 11a22.35 22.35 0 0 1-4 2z"/><path d="M9 12H4s.55-3.03 2-4c1.62-1.08 5 0 5 0"/><path d="M12 15v5s3.03-.55 4-2c1.08-1.62 0-5 0-5"/></svg></span>
     <span class="t" style="left:37.8px;top:8.55px;width:232.6px;height:23px;font-size:17px;line-height:23px;letter-spacing:0.314px;-webkit-text-stroke:0.12px;color:#101012;">Product Roadmap Priorities</span>
    </li>
    <li class="citem" style="left:0px;top:258.28px;width:285.9px;height:38.6px;">
     <span class="ic" style="left:8.85px;top:9.85px;width:19.5px;height:19.5px;"><svg viewBox="0 0 24 24" width="100%" height="100%" fill="none" stroke="#666" stroke-width="1.8" stroke-linecap="round" stroke-linejoin="round"><rect width="20" height="16" x="2" y="4" rx="2"/><path d="m22 7-8.97 5.7a1.94 1.94 0 0 1-2.06 0L2 7"/></svg></span>
     <span class="t" style="left:37.8px;top:8.52px;width:228.1px;height:23px;font-size:17px;line-height:23px;letter-spacing:0.233px;-webkit-text-stroke:0.12px;color:#101012;">Email Response Templates</span>
    </li>
    <li class="citem" style="left:0px;top:301.31px;width:285.9px;height:38.6px;">
     <span class="ic" style="left:8.85px;top:9.85px;width:19.5px;height:19.5px;"><svg viewBox="0 0 24 24" width="100%" height="100%" fill="none" stroke="#666" stroke-width="1.8" stroke-linecap="round" stroke-linejoin="round"><path d="M12 5a3 3 0 1 0-5.997.125 4 4 0 0 0-2.526 5.77 4 4 0 0 0 .556 6.588A4 4 0 1 0 12 18Z"/><path d="M12 5a3 3 0 1 1 5.997.125 4 4 0 0 1 2.526 5.77 4 4 0 0 1-.556 6.588A4 4 0 1 1 12 18Z"/><path d="M15 13a4.5 4.5 0 0 1-3-4 4.5 4.5 0 0 1-3 4"/><path d="M17.599 6.5a3 3 0 0 0 .399-1.375"/><path d="M6.003 5.125A3 3 0 0 0 6.401 6.5"/><path d="M3.477 10.896a4 4 0 0 1 .585-.396"/><path d="M19.938 10.5a4 4 0 0 1 .585.396"/><path d="M6 18a4 4 0 0 1-1.967-.516"/><path d="M19.967 17.484A4 4 0 0 1 18 18"/></svg></span>
     <span class="t" style="left:37.8px;top:8.49px;width:220.1px;height:23px;font-size:17px;line-height:23px;letter-spacing:0.330px;-webkit-text-stroke:0.12px;color:#101012;">Explain Machine Learning</span>
    </li>
   </ul>
  </section>
  <section class="chat" style="left:307px;top:62px;width:1094px;height:928px;">
   <div class="toolbar" style="left:0px;top:0px;width:1094px;height:68px;">
    <div class="btn" style="left:29.3px;top:15.2px;width:37.6px;height:37.7px;">
     <span class="ic" style="left:7.55px;top:7.45px;width:19.5px;height:19.5px;"><svg viewBox="0 0 24 24" width="100%" height="100%" fill="none" stroke="#111" stroke-width="2" stroke-linecap="round" stroke-linejoin="round"><rect width="18" height="18" x="3" y="3" rx="2"/><path d="M9 3v18"/><path d="m16 15-3-3 3-3"/></svg></span>
    </div>
    <div class="models" style="left:77.2px;top:8.3px;width:566.5px;height:50.6px;">
     <div class="mpill" style="left:4.9px;top:5.9px;width:274px;height:37.7px;">
      <div class="mnum" style="left:6.9px;top:5.9px;width:23.6px;height:23.6px;">
       <span class="t" style="left:8.9px;top:3.9px;width:19.5px;height:16px;font-size:12.5px;line-height:16px;-webkit-text-stroke:0.12px;color:#1f1f1f;">1</span>
      </div>
      <span class="t" style="left:35.4px;top:7.8px;width:70.1px;height:20px;font-size:14.6px;line-height:20px;letter-spacing:0.250px;-webkit-text-stroke:0.32px;color:#101012;">GPT-5.2</span>
      <span class="ic" style="left:244.2px;top:10.3px;width:15px;height:15px;"><svg viewBox="0 0 24 24" width="100%" height="100%" fill="none" stroke="#666" stroke-width="1.6" stroke-linecap="round" stroke-linejoin="round"><path d="M18 6 6 18"/><path d="m6 6 12 12"/></svg></span>
     </div>
     <div class="mpill" style="left:285.3px;top:5.9px;width:274.2px;height:37.7px;">
      <div class="mnum" style="left:6.9px;top:5.9px;width:23.6px;height:23.6px;">
       <span class="t" style="left:8.1px;top:3.9px;width:19.5px;height:16px;font-size:12.5px;line-height:16px;-webkit-text-stroke:0.12px;color:#1f1f1f;">2</span>
      </div>
      <span class="t" style="left:36.2px;top:7.8px;width:127.8px;height:20px;font-size:14.6px;line-height:20px;letter-spacing:0.318px;-webkit-text-stroke:0.32px;color:#101012;">Claude Opus 4.6</span>
      <span class="ic" style="left:246.1px;top:10.3px;width:15px;height:15px;"><svg viewBox="0 0 24 24" width="100%" height="100%" fill="none" stroke="#666" stroke-width="1.6" stroke-linecap="round" stroke-linejoin="round"><path d="M18 6 6 18"/><path d="m6 6 12 12"/></svg></span>
     </div>
    </div>
    <div class="btn" style="left:653.8px;top:16.5px;width:39.4px;height:34.6px;">
     <span class="t" style="left:9.2px;top:8.5px;width:28.6px;height:16px;font-size:11.6px;line-height:16px;letter-spacing:0.500px;-webkit-text-stroke:0.12px;color:#666;">2/2</span>
    </div>
    <div class="btn" style="left:707px;top:14.9px;width:37.7px;height:38px;">
     <span class="ic" style="left:9.55px;top:8.45px;width:18.5px;height:18.5px;"><svg viewBox="0 0 24 24" width="100%" height="100%" fill="none" stroke="#111" stroke-width="2" stroke-linecap="round" stroke-linejoin="round"><line x1="21" x2="14" y1="4" y2="4"/><line x1="10" x2="3" y1="4" y2="4"/><line x1="21" x2="12" y1="12" y2="12"/><line x1="8" x2="3" y1="12" y2="12"/><line x1="21" x2="16" y1="20" y2="20"/><line x1="12" x2="3" y1="20" y2="20"/><line x1="14" x2="14" y1="2" y2="6"/><line x1="8" x2="8" y1="10" y2="14"/><line x1="16" x2="16" y1="18" y2="22"/></svg></span>
    </div>
    <div class="btn" style="left:757px;top:14.9px;width:107.2px;height:38px;">
     <span class="ic" style="left:15.1px;top:8.1px;width:19px;height:19px;"><svg viewBox="0 0 24 24" width="100%" height="100%" fill="none" stroke="#111" stroke-width="2" stroke-linecap="round" stroke-linejoin="round"><circle cx="18" cy="5" r="3"/><circle cx="6" cy="12" r="3"/><circle cx="18" cy="19" r="3"/><line x1="8.59" x2="15.42" y1="13.51" y2="17.49"/><line x1="15.41" x2="8.59" y1="6.51" y2="10.49"/></svg></span>
     <span class="t" style="left:50.8px;top:8.1px;width:53.3px;height:20px;font-size:14.6px;line-height:20px;letter-spacing:-0.012px;-webkit-text-stroke:0.32px;color:#111;">Share</span>
    </div>
    <div class="vis" style="left:873.5px;top:13.7px;width:192.6px;height:40.4px;">
     <div class="vis-on" style="left:2.5px;top:2.3px;width:91px;height:33.9px;">
      <span class="ic" style="left:13.9px;top:7.3px;width:19px;height:19px;"><svg viewBox="0 0 24 24" width="100%" height="100%" fill="none" stroke="#fff" stroke-width="2" stroke-linecap="round" stroke-linejoin="round"><path d="M16 21v-2a4 4 0 0 0-4-4H6a4 4 0 0 0-4 4v2"/><circle cx="9" cy="7" r="4"/><path d="M22 21v-2a4 4 0 0 0-3-3.87"/><path d="M16 3.13a4 4 0 0 1 0 7.75"/></svg></span>
      <span class="t" style="left:48.3px;top:9px;width:38.8px;height:16px;font-size:11.3px;line-height:16px;-webkit-text-stroke:0.18px;color:#fff;">Team</span>
     </div>
     <span class="ic" style="left:106.6px;top:9.4px;width:19px;height:19px;"><svg viewBox="0 0 24 24" width="100%" height="100%" fill="none" stroke="#777" stroke-width="1.9" stroke-linecap="round" stroke-linejoin="round"><rect width="18" height="11" x="3" y="11" rx="2" ry="2"/><path d="M7 11V7a5 5 0 0 1 10 0v4"/></svg></span>
     <span class="t" style="left:140.8px;top:11.3px;width:46.7px;height:16px;font-size:11.3px;line-height:16px;letter-spacing:0.067px;-webkit-text-stroke:0.32px;color:#777;">Private</span>
    </div>
   </div>
   <div class="card you" style="left:775px;top:136.7px;width:291.1px;height:96.6px;">
    <div class="topbar" style="left:0px;top:0px;width:291.1px;height:5.2px;background:#3b82f6;"></div>
    <span class="ic" style="left:20.15px;top:23.65px;width:16.5px;height:16.5px;"><svg viewBox="0 0 24 24" width="100%" height="100%" fill="none" stroke="#666" stroke-width="1.8" stroke-linecap="round" stroke-linejoin="round"><path d="M9.937 15.5A2 2 0 0 0 8.5 14.063l-6.135-1.582a.5.5 0 0 1 0-.962L8.5 9.936A2 2 0 0 0 9.937 8.5l1.582-6.135a.5.5 0 0 1 .963 0L14.063 8.5A2 2 0 0 0 15.5 9.937l6.135 1.581a.5.5 0 0 1 0 .964L15.5 14.063a2 2 0 0 0-1.437 1.437l-1.582 6.135a.5.5 0 0 1-.963 0z"/><path d="M20 2v4"/><path d="M22 4h-4"/><circle cx="4" cy="20" r="2"/></svg></span>
    <span class="t" style="left:47px;top:24.3px;width:34.4px;height:16px;font-size:11.5px;line-height:16px;letter-spacing:-1.050px;-webkit-text-stroke:0.12px;color:#737373;">YOU</span>
    <span class="t" style="left:20.7px;top:55.3px;width:265.6px;height:23px;font-size:17px;line-height:23px;letter-spacing:0.355px;-webkit-text-stroke:0.12px;color:#101012;">What is the capital of Australia?</span>
   </div>
   <div class="card resp" style="left:29.4px;top:252.7px;width:508.2px;height:228.2px;">
    <div class="topbar" style="left:0px;top:0px;width:508.2px;height:5.2px;background:#10b981;"></div>
    <span class="t" style="left:29.1px;top:35.3px;width:67.3px;height:18px;font-size:14.5px;line-height:18px;letter-spacing:-0.390px;-webkit-text-stroke:0.12px;color:#737373;">OPENAI</span>
    <span class="t" style="left:29.1px;top:54.3px;width:83px;height:23px;font-size:17px;line-height:23px;letter-spacing:0.458px;font-weight:700;color:#111;">GPT-5.2</span>
    <div class="badge" style="left:409.8px;top:34.6px;width:68.6px;height:20.4px;">
     <span class="t" style="left:12.7px;top:2.7px;width:53px;height:14px;font-size:11px;line-height:14px;letter-spacing:-0.107px;-webkit-text-stroke:0.18px;color:#fff;">Selected</span>
    </div>
    <span class="t" style="left:29.1px;top:93.3px;width:452.4px;height:23px;font-size:17px;line-height:23px;letter-spacing:0.375px;-webkit-text-stroke:0.12px;color:#101012;">The capital of Australia is Canberra. It was chosen as a</span>
    <span class="t" style="left:29.1px;top:120.3px;width:381px;height:23px;font-size:17px;line-height:23px;letter-spacing:0.468px;-webkit-text-stroke:0.12px;color:#101012;">compromise between Sydney and Melbourne.</span>
    <div class="selbtn" style="left:29.5px;top:160.6px;width:448.9px;height:38.5px;">
     <span class="ic" style="left:176.95px;top:10.55px;width:17.5px;height:17.5px;"><svg viewBox="0 0 24 24" width="100%" height="100%" fill="none" stroke="#fff" stroke-width="1.9" stroke-linecap="round" stroke-linejoin="round"><circle cx="12" cy="12" r="10"/><path d="m9 12 2 2 4-4"/></svg></span>
     <span class="t" style="left:212.2px;top:9.7px;width:74.1px;height:20px;font-size:14.6px;line-height:20px;letter-spacing:0.429px;-webkit-text-stroke:0.18px;color:#fff;">Selected</span>
    </div>
   </div>
   <div class="card resp" style="left:557.5px;top:252.7px;width:508.5px;height:228.2px;">
    <div class="topbar" style="left:0px;top:0px;width:508.5px;height:5.2px;background:#f59e0b;"></div>
    <span class="t" style="left:29px;top:35.3px;width:98.2px;height:18px;font-size:14.5px;line-height:18px;letter-spacing:-0.225px;-webkit-text-stroke:0.12px;color:#737373;">ANTHROPIC</span>
    <span class="t" style="left:29px;top:54.3px;width:150.4px;height:23px;font-size:17px;line-height:23px;letter-spacing:0.011px;font-weight:700;color:#111;">Claude Opus 4.6</span>
    <span class="t" style="left:29px;top:93.3px;width:456.8px;height:23px;font-size:17px;line-height:23px;letter-spacing:0.401px;-webkit-text-stroke:0.12px;color:#101012;">Many people are unaware that the capital of Australia is</span>
    <span class="t" style="left:29px;top:120.3px;width:442.4px;height:23px;font-size:17px;line-height:23px;letter-spacing:0.357px;-webkit-text-stroke:0.12px;color:#101012;">Canberra, not Sydney or Melbourne as many assume.</span>
    <div class="usebtn" style="left:29px;top:160.1px;width:450px;height:39.5px;">
     <span class="ic" style="left:140.45px;top:10.05px;width:17.5px;height:17.5px;"><svg viewBox="0 0 24 24" width="100%" height="100%" fill="none" stroke="#111" stroke-width="1.9" stroke-linecap="round" stroke-linejoin="round"><circle cx="12" cy="12" r="10"/></svg></span>
     <span class="t" style="left:175.8px;top:9.2px;width:145.1px;height:20px;font-size:14.6px;line-height:20px;letter-spacing:0.266px;-webkit-text-stroke:0.32px;color:#111;">Use This Response</span>
    </div>
   </div>
   <div class="composer" style="left:29.9px;top:690.6px;width:1035.6px;height:217.7px;">
    <div class="topbar gbar2" style="left:0px;top:0px;width:1035.6px;height:5.2px;"></div>
    <div class="opts" style="left:14.6px;top:20.8px;width:1005.1px;height:97.6px;">
     <div class="check" style="left:18.5px;top:14px;width:19.8px;height:18.4px;">
      <span class="ic" style="left:1.15px;top:0.45px;width:17.5px;height:17.5px;"><svg viewBox="0 0 24 24" width="100%" height="100%" fill="none" stroke="#fff" stroke-width="2.3" stroke-linecap="round" stroke-linejoin="round"><path d="M20 6 9 17l-5-5"/></svg></span>
     </div>
     <span class="ic" style="left:45.05px;top:15.55px;width:14.5px;height:14.5px;"><svg viewBox="0 0 24 24" width="100%" height="100%" fill="none" stroke="#777" stroke-width="1.8" stroke-linecap="round" stroke-linejoin="round"><circle cx="12" cy="12" r="10"/><path d="M12 2a14.5 14.5 0 0 0 0 20 14.5 14.5 0 0 0 0-20"/><path d="M2 12h20"/></svg></span>
     <span class="t" style="left:64.7px;top:13.6px;width:96.4px;height:20px;font-size:14.6px;line-height:20px;letter-spacing:0.256px;-webkit-text-stroke:0.12px;color:#737373;">Web Search</span>
     <div class="bgroup" style="left:18.6px;top:44.6px;width:136.8px;height:39.3px;">
      <span class="ic" style="left:15.45px;top:9.35px;width:18.5px;height:18.5px;"><svg viewBox="0 0 24 24" width="100%" height="100%" fill="none" stroke="#111" stroke-width="2" stroke-linecap="round" stroke-linejoin="round"><path d="m21.44 11.05-9.19 9.19a6 6 0 0 1-8.49-8.49l8.57-8.57A4 4 0 1 1 18 8.84l-8.59 8.57a2 2 0 0 1-2.83-2.83l8.49-8.48"/></svg></span>
      <span class="t" style="left:41.6px;top:9px;width:57.5px;height:20px;font-size:14.6px;line-height:20px;letter-spacing:0.380px;-webkit-text-stroke:0.32px;color:#111;">Attach</span>
      <div class="bdiv" style="left:99.7px;top:-0.5px;width:1px;height:38.3px;"></div>
      <span class="ic" style="left:108.7px;top:9.1px;width:19px;height:19px;"><svg viewBox="0 0 24 24" width="100%" height="100%" fill="none" stroke="#111" stroke-width="2" stroke-linecap="round" stroke-linejoin="round"><path d="m6 9 6 6 6-6"/></svg></span>
     </div>
     <div class="bgroup" style="left:165.4px;top:44.6px;width:178.2px;height:39.3px;">
      <span class="ic" style="left:14.8px;top:9.6px;width:18px;height:18px;"><svg viewBox="0 0 24 24" width="100%" height="100%" fill="none" stroke="#111" stroke-width="2" stroke-linecap="round" stroke-linejoin="round"><path d="M5 12h14"/><path d="M12 5v14"/></svg></span>
      <span class="t" style="left:40.7px;top:9px;width:95px;height:20px;font-size:14.6px;line-height:20px;letter-spacing:0.433px;-webkit-text-stroke:0.32px;color:#111;">Add Prompt</span>
      <div class="bdiv" style="left:136.3px;top:-0.5px;width:1px;height:38.3px;"></div>
      <span class="ic" style="left:147px;top:9.1px;width:19px;height:19px;"><svg viewBox="0 0 24 24" width="100%" height="100%" fill="none" stroke="#111" stroke-width="2" stroke-linecap="round" stroke-linejoin="round"><path d="m6 9 6 6 6-6"/></svg></span>
     </div>
     <div class="send" style="left:948.7px;top:45px;width:37.6px;height:38.4px;">
      <span class="ic" style="left:10.3px;top:10.7px;width:17px;height:17px;"><svg viewBox="0 0 24 24" width="100%" height="100%" fill="none" stroke="#fff" stroke-width="1.9" stroke-linecap="round" stroke-linejoin="round"><path d="m5 12 7-7 7 7"/><path d="M12 19V5"/></svg></span>
     </div>
    </div>
    <span class="t" style="left:18.6px;top:143.4px;width:225.8px;height:23px;font-size:17px;line-height:23px;letter-spacing:0.356px;-webkit-text-stroke:0.12px;color:#777;">How can I help you today?</span>
   </div>
  </section>
 </main>
</div>
</body>
</html>
